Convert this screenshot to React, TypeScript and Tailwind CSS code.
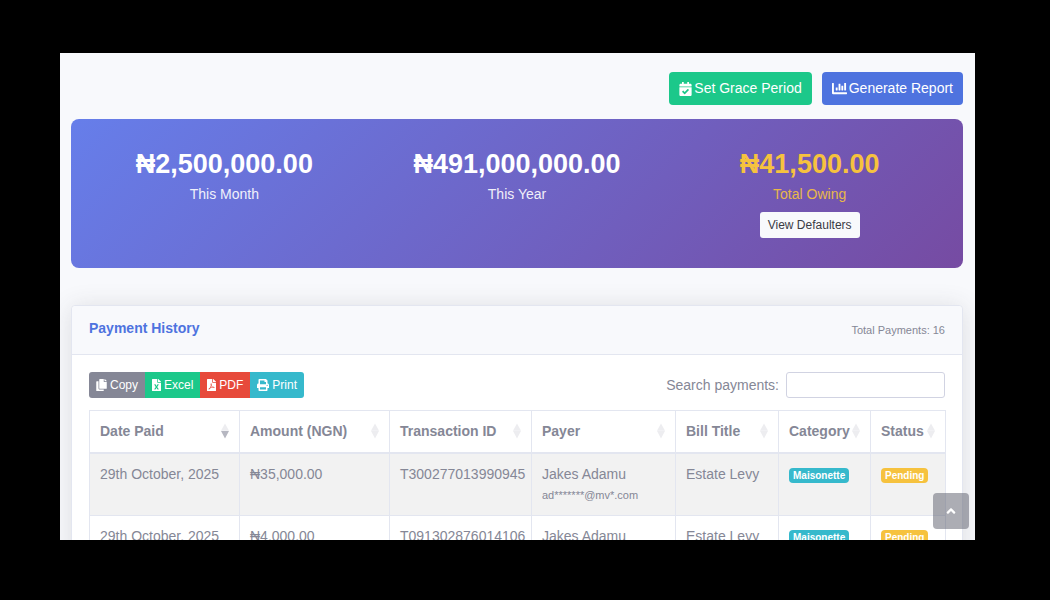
import type { ReactNode } from "react";
import {
  FaAngleUp,
  FaCalendarCheck,
  FaChartBar,
  FaCopy,
  FaFileExcel,
  FaFilePdf,
  FaPrint,
} from "react-icons/fa";

type Sort = "none" | "desc";

const columns: { label: string; width: string; sort: Sort }[] = [
  { label: "Date Paid", width: "w-[150px]", sort: "desc" },
  { label: "Amount (NGN)", width: "w-[150px]", sort: "none" },
  { label: "Transaction ID", width: "w-[142px]", sort: "none" },
  { label: "Payer", width: "w-[144px]", sort: "none" },
  { label: "Bill Title", width: "w-[103px]", sort: "none" },
  { label: "Category", width: "w-[92px]", sort: "none" },
  { label: "Status", width: "w-[75px]", sort: "none" },
];

const payments = [
  { date: "29th October, 2025", amount: "₦35,000.00", id: "T300277013990945", payer: "Jakes Adamu", email: "ad*******@mv*.com", bill: "Estate Levy", category: "Maisonette", status: "Pending" },
  { date: "29th October, 2025", amount: "₦4,000.00", id: "T091302876014106", payer: "Jakes Adamu", email: "ad*******@mv*.com", bill: "Estate Levy", category: "Maisonette", status: "Pending" },
];

const exportButtons = [
  { label: "Copy", icon: FaCopy, color: "bg-[#858796]", iconWidth: "w-[11px]" },
  { label: "Excel", icon: FaFileExcel, color: "bg-[#1cc88a]", iconWidth: "w-[9px]" },
  { label: "PDF", icon: FaFilePdf, color: "bg-[#e74a3b]", iconWidth: "w-[9px]" },
  { label: "Print", icon: FaPrint, color: "bg-[#36b9cc]", iconWidth: "w-3" },
];

function SortArrows({ sort }: { sort: Sort }) {
  return (
    <svg viewBox="0 0 8 16" className="h-4 w-2 shrink-0" aria-hidden="true">
      <path d="M4 0.5L8 7.8H0Z" fill="#ededf0" />
      <path d="M4 15.5L8 8H0Z" fill={sort === "desc" ? "#b6b7c1" : "#ededf0"} />
    </svg>
  );
}

function Badge({ color, children }: { color: string; children: ReactNode }) {
  return (
    <span className={`inline-block rounded px-1 text-[10px] leading-[15px] font-bold text-white ${color}`}>
      {children}
    </span>
  );
}

function Stat({ amount, label, tone, children }: { amount: string; label: string; tone: string; children?: ReactNode }) {
  return (
    <div className={`flex flex-col items-center ${tone}`}>
      <h2 className="text-[27px] leading-[32px] font-bold">{amount}</h2>
      <p className="mt-1 leading-5 opacity-90">{label}</p>
      {children}
    </div>
  );
}

export default function App() {
  return (
    <div className="flex h-screen flex-col bg-black pt-[53px] pr-[75px] pb-[60px] pl-[60px] font-['Liberation_Sans',Arial,sans-serif] text-[14px] text-[#858796]">
      <main className="relative min-h-0 flex-1 overflow-hidden bg-[#f8f9fc] pt-[19px] pr-3 pl-[11px]">
        <div className="flex justify-end gap-[10px] text-white">
          <button type="button" className="flex h-[33px] items-center gap-[2px] rounded bg-[#1cc88a] px-[10px]">
            <FaCalendarCheck className="h-[14px] w-[13px]" />
            Set Grace Period
          </button>
          <button type="button" className="flex h-[33px] items-center gap-[2px] rounded bg-[#4e73df] px-[10px]">
            <FaChartBar className="size-[15px]" />
            Generate Report
          </button>
        </div>

        <section className="mt-[14px] grid min-h-[149px] grid-cols-3 rounded-lg bg-[linear-gradient(135deg,#667eea_0%,#764ba2_100%)] px-[7px] py-[29px]">
          <Stat amount="₦2,500,000.00" label="This Month" tone="text-white" />
          <Stat amount="₦491,000,000.00" label="This Year" tone="text-white" />
          <Stat amount="₦41,500.00" label="Total Owing" tone="text-[#f6c23e]">
            <button type="button" className="mt-2 h-[26px] rounded-[3px] bg-[#f8f9fc] px-2 text-[12px] text-[#3a3b45]">
              View Defaulters
            </button>
          </Stat>
        </section>

        <section className="mt-[37px] rounded border border-[#e3e6f0] bg-white shadow-[0_2px_24px_rgba(58,59,69,0.15)]">
          <header className="flex h-[49px] items-center justify-between rounded-t border-b border-[#e3e6f0] bg-[#f8f9fc] px-[17px]">
            <h6 className="pb-1 font-bold text-[#4e73df]">Payment History</h6>
            <small className="text-[11px]">Total Payments: 16</small>
          </header>

          <div className="p-[17px]">
            <div className="flex items-center justify-between">
              <div className="flex overflow-hidden rounded-[3px] text-[12px] text-white">
                {exportButtons.map(({ label, icon: Icon, color, iconWidth }) => (
                  <button key={label} type="button" className={`flex h-[26px] items-center gap-[3px] px-[7px] ${color}`}>
                    <Icon className={`h-3 ${iconWidth}`} />
                    {label}
                  </button>
                ))}
              </div>
              <label className="flex items-center gap-[7px]">
                Search payments:
                <input type="search" className="h-[26px] w-[159px] rounded-[3px] border border-[#d1d3e2] bg-white px-2 text-[12px] outline-none" />
              </label>
            </div>

            <table className="mt-3 w-full table-fixed border-collapse border border-[#e3e6f0] text-left whitespace-nowrap">
              <thead>
                <tr>
                  {columns.map((column) => (
                    <th key={column.label} scope="col" className={`h-[42px] border border-b-2 border-[#e3e6f0] px-[10px] ${column.width}`}>
                      <div className="flex items-center justify-between">
                        {column.label}
                        <SortArrows sort={column.sort} />
                      </div>
                    </th>
                  ))}
                </tr>
              </thead>
              <tbody className="[&_td]:border [&_td]:border-[#e3e6f0] [&_td]:px-[10px] [&_td]:pt-[10px] [&_td]:align-top [&_td]:leading-5">
                {payments.map((payment) => (
                  <tr key={payment.id} className="h-[63px] odd:bg-[#f2f2f2]">
                    <td>{payment.date}</td>
                    <td>{payment.amount}</td>
                    <td>{payment.id}</td>
                    <td>
                      {payment.payer}
                      <small className="block text-[11px] leading-[22px]">{payment.email}</small>
                    </td>
                    <td>{payment.bill}</td>
                    <td><Badge color="bg-[#36b9cc]">{payment.category}</Badge></td>
                    <td><Badge color="bg-[#f6c23e]">{payment.status}</Badge></td>
                  </tr>
                ))}
              </tbody>
            </table>
          </div>
        </section>

        <a href="#root" aria-label="Scroll to top" className="absolute right-[6px] bottom-[11px] flex size-9 items-center justify-center rounded bg-[#5a5c69]/50 text-white">
          <FaAngleUp className="size-[14px]" />
        </a>
      </main>
    </div>
  );
}
